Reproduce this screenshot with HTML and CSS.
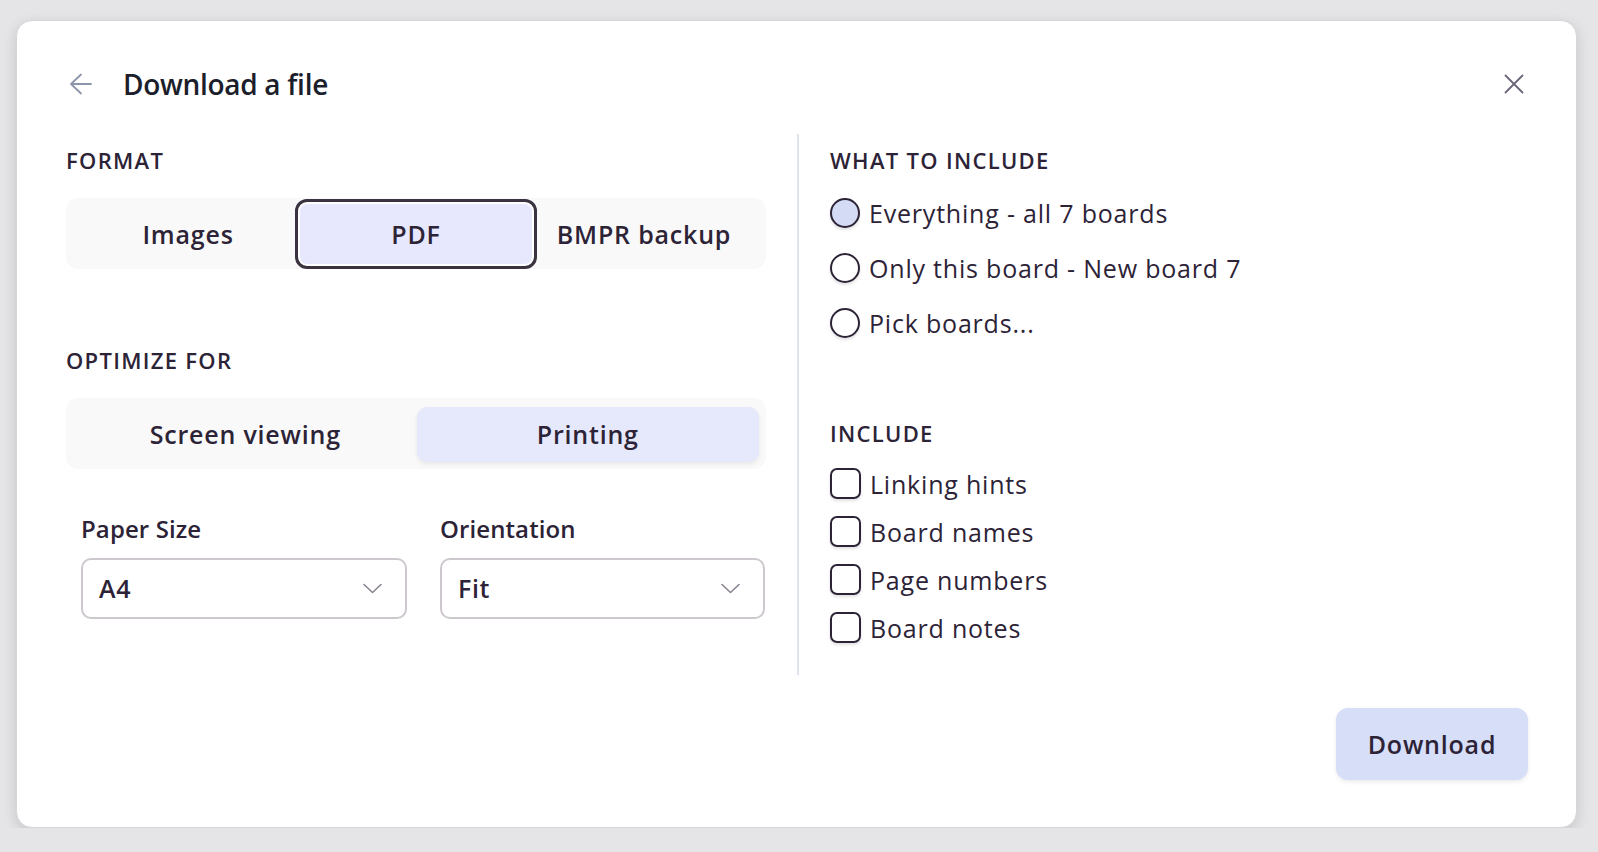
FILE: index.html
```html
<!DOCTYPE html>
<html lang="en">
<head>
<meta charset="UTF-8">
<meta name="viewport" content="width=device-width, initial-scale=1.0">
<title>Download a file</title>
<link rel="stylesheet" href="styles.css">
</head>
<body>
<div class="dialog">
    <header class="dialog_header">
        <button class="icon_btn back_btn" aria-label="Back">
            <svg width="24" height="22" viewBox="0 0 24 22" fill="none" stroke="#8d95ab" stroke-width="1.8" stroke-linecap="round" stroke-linejoin="round">
                <path d="M22 11H2M12 1.5L2 11l10 9.5"/>
            </svg>
        </button>
        <h1 class="title">Download a file</h1>
        <button class="icon_btn close_btn" aria-label="Close">
            <svg width="20" height="20" viewBox="0 0 20 20" fill="none" stroke="#6d6478" stroke-width="1.8" stroke-linecap="round">
                <path d="M1.5 1.5l17 17M18.5 1.5l-17 17"/>
            </svg>
        </button>
    </header>

    <div class="dialog_body">
        <section class="left_col">
            <div class="section_title">FORMAT</div>
            <div class="segmented format_seg">
                <div class="segment">Images</div>
                <div class="segment selected">PDF</div>
                <div class="segment">BMPR backup</div>
            </div>

            <div class="section_title optimize_title">OPTIMIZE FOR</div>
            <div class="segmented optimize_seg">
                <div class="segment">Screen viewing</div>
                <div class="segment selected">Printing</div>
            </div>

            <div class="fields">
                <div class="field">
                    <label class="field_label">Paper Size</label>
                    <div class="select">
                        <span>A4</span>
                        <svg width="19" height="11" viewBox="0 0 19 11" fill="none" stroke="#8a8390" stroke-width="1.6" stroke-linecap="round" stroke-linejoin="round">
                            <path d="M1 1.5l8.5 8 8.5-8"/>
                        </svg>
                    </div>
                </div>
                <div class="field">
                    <label class="field_label">Orientation</label>
                    <div class="select">
                        <span>Fit</span>
                        <svg width="19" height="11" viewBox="0 0 19 11" fill="none" stroke="#8a8390" stroke-width="1.6" stroke-linecap="round" stroke-linejoin="round">
                            <path d="M1 1.5l8.5 8 8.5-8"/>
                        </svg>
                    </div>
                </div>
            </div>
        </section>

        <div class="divider"></div>

        <section class="right_col">
            <div class="section_title">WHAT TO INCLUDE</div>
            <div class="option_list radios">
                <div class="option"><span class="radio checked"></span>Everything - all 7 boards</div>
                <div class="option"><span class="radio"></span>Only this board - New board 7</div>
                <div class="option"><span class="radio"></span>Pick boards...</div>
            </div>

            <div class="section_title include_title">INCLUDE</div>
            <div class="option_list checks">
                <div class="option"><span class="checkbox"></span>Linking hints</div>
                <div class="option"><span class="checkbox"></span>Board names</div>
                <div class="option"><span class="checkbox"></span>Page numbers</div>
                <div class="option"><span class="checkbox"></span>Board notes</div>
            </div>
        </section>
    </div>

    <footer class="dialog_footer">
        <button class="download_btn">Download</button>
    </footer>
</div>
</body>
</html>
```

FILE: styles.css
```css
* {
    margin: 0;
    padding: 0;
    box-sizing: border-box;
    font-family: "Open Sans", sans-serif;
}

body {
    background-color: #e5e5e8;
    color: #2d2337;
}

.dialog {
    width: 1561px;
    height: 808px;
    margin: 20px 0 0 16px;
    padding: 42px 48px 47px 49px;
    background: #ffffff;
    border: 1px solid #d8d4d8;
    border-radius: 16px;
    box-shadow: 0 4px 14px rgba(0,0,0,0.14);
    display: flex;
    flex-direction: column;
}

.dialog_header {
    height: 42px;
    display: flex;
    align-items: center;
    padding-right: 4px;
}

.icon_btn {
    background: none;
    border: none;
    display: flex;
    align-items: center;
    cursor: pointer;
}

.back_btn {
    margin-left: 3px;
    width: 54px;
}

.title {
    font-size: 28px;
    font-weight: 560;
    letter-spacing: -0.3px;
    color: #1c1e2c;
    flex: 1;
}

.dialog_body {
    margin-top: 29px;
    height: 543px;
    display: grid;
    grid-template-columns: 700px 2px 1fr;
    column-gap: 31px;
}

.divider {
    background: #e1e4ef;
}

.section_title {
    font-size: 22px;
    line-height: 26px;
    font-weight: 640;
    letter-spacing: 1.3px;
    color: #2d2337;
    margin-top: 13px;
}

.segmented {
    background: #f9f9f9;
    border-radius: 12px;
    display: grid;
    margin-top: 25px;
}

.segment {
    display: flex;
    align-items: center;
    justify-content: center;
    font-size: 25px;
    font-weight: 550;
    letter-spacing: 0.8px;
    color: #2d2337;
}

.format_seg {
    height: 71px;
    padding: 1px 8px 0;
    grid-template-columns: repeat(3, 1fr);
}

.format_seg .selected {
    margin: 0 -7px;
    background: #e7e8fd;
    border: 3px solid #3b3340;
    border-radius: 12px;
    box-shadow: inset 0 0 0 2px #ffffff;
}

.optimize_title {
    margin-top: 78px;
}

.optimize_seg {
    height: 71px;
    padding: 9px 7px 7px 8px;
    grid-template-columns: repeat(2, 1fr);
}

.optimize_seg .selected {
    background: #e6e8fc;
    border-radius: 10px;
    box-shadow: 0 2px 4px rgba(0,0,0,0.08);
}

.fields {
    display: grid;
    grid-template-columns: 326px 325px;
    column-gap: 33px;
    padding-left: 15px;
    margin-top: 45px;
}

.field_label {
    display: block;
    font-size: 24px;
    line-height: 30px;
    font-weight: 550;
    letter-spacing: 0.1px;
}

.select {
    margin-top: 14px;
    height: 61px;
    border: 2px solid #cdc8cd;
    border-radius: 10px;
    display: flex;
    align-items: center;
    justify-content: space-between;
    padding: 0 23px 0 16px;
    font-size: 25px;
    font-weight: 550;
    letter-spacing: 0.6px;
}

.option_list {
    display: flex;
    flex-direction: column;
}

.radios {
    margin-top: 13px;
}

.radios .option {
    height: 55px;
}

.option {
    display: flex;
    align-items: center;
    column-gap: 9px;
    font-size: 25px;
    font-weight: 420;
    letter-spacing: 0.8px;
    color: #2d2337;
}

.radio {
    width: 30px;
    height: 30px;
    border: 2px solid #2d2337;
    border-radius: 50%;
    box-shadow: 0 2px 3px rgba(0,0,0,0.12);
}

.radio.checked {
    background: #d3dbf5;
}

.include_title {
    margin-top: 69px;
}

.checks {
    margin-top: 14px;
}

.checks .option {
    height: 48px;
}

.checkbox {
    width: 31px;
    height: 31px;
    border: 2px solid #2d2337;
    border-radius: 7px;
    box-shadow: 0 2px 3px rgba(0,0,0,0.12);
}

.dialog_footer {
    margin-top: 33px;
    display: flex;
    justify-content: flex-end;
}

.download_btn {
    width: 192px;
    height: 72px;
    border: none;
    border-radius: 12px;
    background: #d7def7;
    box-shadow: 0 2px 4px rgba(0,0,0,0.08);
    font-size: 25px;
    font-weight: 550;
    letter-spacing: 0.8px;
    color: #2d2337;
    cursor: pointer;
}
```
